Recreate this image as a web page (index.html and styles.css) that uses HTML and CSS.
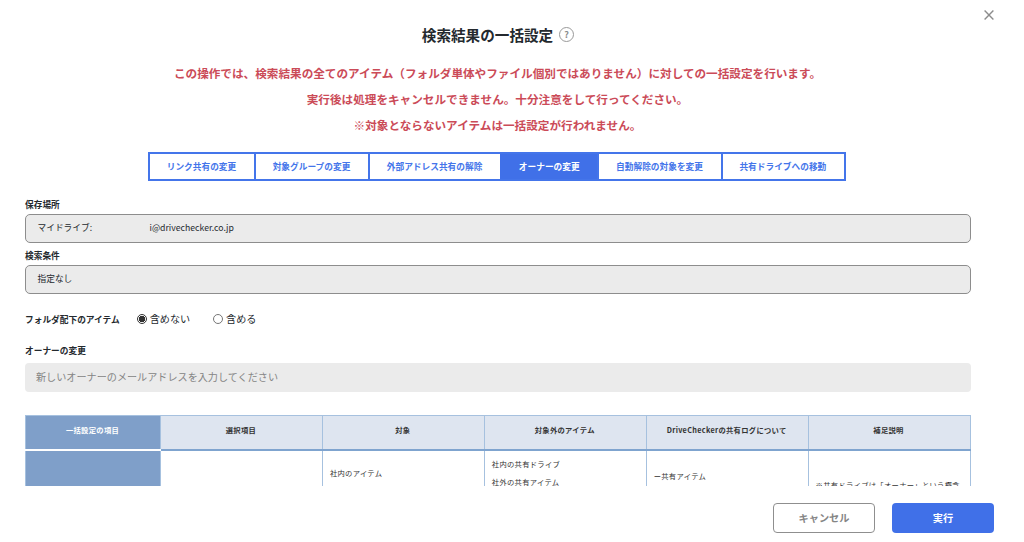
FILE: index.html
```html
<!DOCTYPE html>
<html lang="ja">
<head>
  <meta charset="UTF-8" />
  <title>検索結果の一括設定</title>
  <link rel="stylesheet" href="styles.css">
</head>
<body>
  <div class="modal">
    <button class="close-btn" type="button" aria-label="閉じる">
      <svg viewBox="0 0 10 10" width="10" height="10"><path d="M.6.6l8.8 8.8M9.4.6L.6 9.4" /></svg>
    </button>

    <h1 class="title">
      <span>検索結果の一括設定</span>
      <span class="help">?</span>
    </h1>

    <div class="warning">
      <p>この操作では、検索結果の全てのアイテム（フォルダ単体やファイル個別ではありません）に対しての一括設定を行います。</p>
      <p>実行後は処理をキャンセルできません。十分注意をして行ってください。</p>
      <p>※対象とならないアイテムは一括設定が行われません。</p>
    </div>

    <div class="tabs">
      <button class="tab" type="button">リンク共有の変更</button>
      <button class="tab" type="button">対象グループの変更</button>
      <button class="tab" type="button">外部アドレス共有の解除</button>
      <button class="tab active" type="button">オーナーの変更</button>
      <button class="tab" type="button">自動解除の対象を変更</button>
      <button class="tab" type="button">共有ドライブへの移動</button>
    </div>

    <div class="content">
      <div class="label">保存場所</div>
      <div class="readonly"><span class="drive">マイドライブ:</span><span>i@drivechecker.co.jp</span></div>
      <div class="label">検索条件</div>
      <div class="readonly">指定なし</div>

      <div class="radio-row">
        <span class="label">フォルダ配下のアイテム</span>
        <label class="radio"><input type="radio" name="folder" checked>含めない</label>
        <label class="radio"><input type="radio" name="folder">含める</label>
      </div>

      <div class="label">オーナーの変更</div>
      <input class="owner" type="text" placeholder="新しいオーナーのメールアドレスを入力してください">

      <div class="table-wrap">
        <table>
          <thead>
            <tr>
              <th class="item">一括設定の項目</th>
              <th>選択項目</th>
              <th>対象</th>
              <th>対象外のアイテム</th>
              <th>DriveCheckerの共有ログについて</th>
              <th>補足説明</th>
            </tr>
          </thead>
          <tbody>
            <tr>
              <td class="item"></td>
              <td></td>
              <td class="target">社内のアイテム</td>
              <td class="exclude">社内の共有ドライブ<br>社外の共有アイテム</td>
              <td class="log">ー共有アイテム</td>
              <td class="note">※共有ドライブは「オーナー」という概念</td>
            </tr>
          </tbody>
        </table>
      </div>
    </div>

    <div class="footer">
      <button class="btn cancel" type="button">キャンセル</button>
      <button class="btn submit" type="button">実行</button>
    </div>
  </div>
</body>
</html>
```
FILE: styles.css
```css
* {
  box-sizing: border-box;
}
body {
  margin: 0;
  background: #fff;
  color: #24292e;
  font-family: "Noto Sans CJK JP", sans-serif;
  font-size: 8.7px;
}
button, input {
  font-family: inherit;
}
.modal {
  position: relative;
  height: 542px;
  overflow: hidden;
  padding-top: 24px;
}
.close-btn {
  position: absolute;
  top: 10px;
  right: 30px;
  width: 10px;
  height: 10px;
  padding: 0;
  border: none;
  background: none;
}
.close-btn svg {
  display: block;
  fill: none;
  stroke: #8c8c8c;
  stroke-width: 1.4;
}
.title {
  display: flex;
  justify-content: center;
  align-items: center;
  gap: 6px;
  height: 21px;
  margin: 0;
  padding-right: 28px;
  font-size: 14.6px;
  line-height: 21px;
}
.help {
  width: 15px;
  height: 15px;
  border: 1px solid #999;
  border-radius: 50%;
  color: #8c8c8c;
  font-size: 9px;
  line-height: 13px;
  text-align: center;
}
.warning {
  margin-top: 15px;
  padding-right: 29px;
  color: #cb4b58;
  font-size: 11.62px;
  font-weight: bold;
  line-height: 26.2px;
  text-align: center;
}
.warning p {
  margin: 0;
}
.tabs {
  display: flex;
  width: 698px;
  height: 29px;
  margin: 13.4px 0 0 148px;
  border: 2px solid #4475ea;
}
.tab {
  flex: 1 1 auto;
  padding: 0 1px 0 0;
  border: none;
  border-left: 2px solid #4475ea;
  background: #fff;
  color: #4475ea;
  font-size: 8.7px;
  font-weight: bold;
}
.tab:first-child {
  border-left: none;
}
.tab.active {
  border-color: #4070e8;
  background: #4070e8;
  color: #fff;
}
.content {
  height: 305px;
  padding: 17px 53.5px 0 25px;
  overflow: hidden;
}
.label {
  font-weight: bold;
  line-height: 13px;
}
.readonly {
  display: flex;
  height: 29px;
  margin: 3px 0 6px;
  padding: 0 11.5px;
  border: 1px solid #8d8d8d;
  border-radius: 5px;
  background: #ebebeb;
  line-height: 26px;
}
.drive {
  width: 112px;
}
.radio-row {
  display: flex;
  align-items: center;
  height: 20px;
  margin: 15px 0 15px;
}
.radio {
  display: flex;
  align-items: center;
  height: 16px;
  font-size: 10.1px;
  line-height: 14px;
  margin-left: 17px;
}
.radio + .radio {
  margin-left: 23px;
}
.radio input {
  appearance: none;
  width: 10px;
  height: 10px;
  margin: 0 3px 0 0;
  border: 1px solid #767676;
  border-radius: 50%;
}
.radio input:checked {
  border-color: #333;
  background: radial-gradient(#333 0 3px, #fff 3.5px);
}
.owner {
  display: block;
  width: 100%;
  height: 29px;
  margin-top: 6px;
  padding: 0 11px 2px;
  border: none;
  border-radius: 4px;
  background: #ebebeb;
  font-size: 10.12px;
}
.owner::placeholder {
  color: #858585;
}
.table-wrap {
  height: 71px;
  margin-top: 23px;
  overflow: hidden;
}
table {
  width: 100%;
  border-collapse: collapse;
  table-layout: fixed;
  color: #333;
  font-size: 7.3px;
  letter-spacing: 0.3px;
}
th, td {
  border: 1px solid #a6c1df;
}
th {
  height: 34px;
  padding: 0 1px 5px 0;
  border-bottom: 2px solid #7fa4cf;
  background: #dee5f0;
}
td {
  height: 90px;
  padding: 0 7px;
  line-height: 18.5px;
  vertical-align: top;
  white-space: nowrap;
}
.item {
  width: 135px;
  background: #7f9fc9;
  color: #fff;
}
th.item {
  border-bottom-color: #fff;
}
.target {
  padding-top: 13px;
}
.exclude {
  padding-top: 4px;
}
.log {
  padding-top: 16px;
}
.note {
  padding-top: 25px;
}
.footer {
  display: flex;
  justify-content: flex-end;
  gap: 17px;
  padding: 17px 30px 0 0;
}
.btn {
  width: 102px;
  height: 30px;
  padding: 0 0 1px;
  border-radius: 4px;
  font-size: 10.2px;
  font-weight: bold;
}
.cancel {
  border: 1.5px solid #8f8f8f;
  background: #fff;
  color: #858585;
}
.submit {
  border: none;
  background: #4070e8;
  color: #fff;
}
```
